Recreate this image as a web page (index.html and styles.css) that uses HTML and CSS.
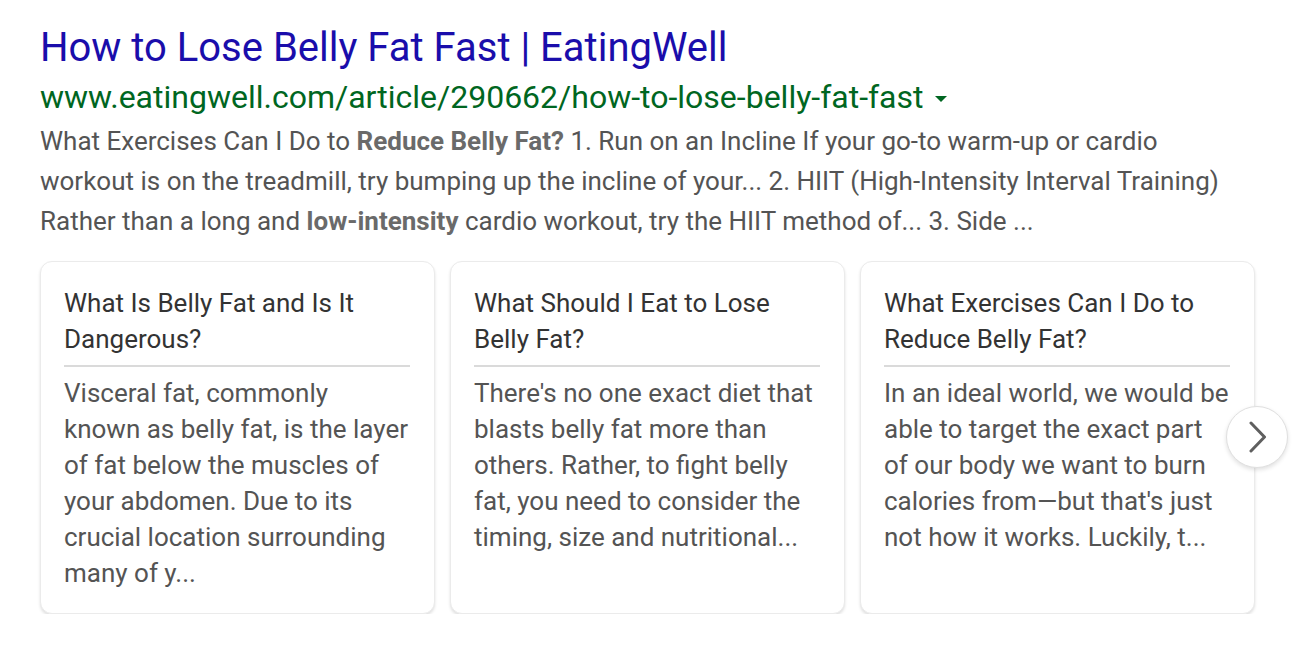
FILE: index.html
```html
<!DOCTYPE html>
<html>
<head>
<meta charset="utf-8">
<link rel="stylesheet" href="styles.css">
</head>
<body>
<div class="result">
  <h3 class="title">How to Lose Belly Fat Fast | EatingWell</h3>
  <div class="url">www.eatingwell.com/article/290662/how-to-lose-belly-fat-fast<span class="caret"></span></div>
  <div class="snippet">What Exercises Can I Do to <b>Reduce Belly Fat?</b> 1. Run on an Incline If your go-to warm-up or cardio workout is on the treadmill, try bumping up the incline of your... 2. HIIT (High-Intensity Interval Training) Rather than a long and <b>low-intensity</b> cardio workout, try the HIIT method of... 3. Side ...</div>
  <div class="carousel">
    <div class="card">
      <div class="card-title">What Is Belly Fat and Is It Dangerous?</div>
      <div class="card-body">Visceral fat, commonly known as belly fat, is the layer of fat below the muscles of your abdomen. Due to its crucial location surrounding many of y...</div>
    </div>
    <div class="card">
      <div class="card-title">What Should I Eat to Lose Belly Fat?</div>
      <div class="card-body">There's no one exact diet that blasts belly fat more than others. Rather, to fight belly fat, you need to consider the timing, size and nutritional...</div>
    </div>
    <div class="card">
      <div class="card-title">What Exercises Can I Do to Reduce Belly Fat?</div>
      <div class="card-body">In an ideal world, we would be able to target the exact part of our body we want to burn calories from—but that's just not how it works. Luckily, t...</div>
    </div>
    <button class="next" aria-label="Next">
      <svg width="32" height="32" viewBox="0 0 32 32"><path d="M10 2 L23.5 16 L10 30" fill="none" stroke="#5f5f5f" stroke-width="3" stroke-linecap="round" stroke-linejoin="round"/></svg>
    </button>
  </div>
</div>
</body>
</html>
```

FILE: styles.css
```css
html, body {
  margin: 0;
  padding: 0;
  background: #fff;
}
body {
  font-family: Roboto, "Liberation Sans", Arial, sans-serif;
}
.result {
  padding: 23px 0 0 40px;
  width: 1216px;
}
.title {
  margin: 0;
  font-size: 40px;
  line-height: 50px;
  font-weight: 400;
  color: #1a0dab;
  white-space: nowrap;
}
.url {
  font-size: 32px;
  line-height: 48px;
  color: #006621;
  white-space: nowrap;
  display: flex;
  align-items: center;
}
.caret {
  display: inline-block;
  margin-left: 11px;
  margin-top: 4px;
  width: 0;
  height: 0;
  border-left: 6px solid transparent;
  border-right: 6px solid transparent;
  border-top: 6px solid #006621;
}
.snippet {
  font-size: 26px;
  line-height: 40px;
  color: #545454;
  width: 1200px;
}
.snippet b {
  color: #6a6a6a;
  font-weight: 700;
}
.carousel {
  position: relative;
  display: flex;
  gap: 15px;
  margin-top: 20px;
  width: 1216px;
}
.card {
  box-sizing: border-box;
  width: 395px;
  flex: none;
  border: 1px solid #ebebeb;
  border-radius: 12px;
  box-shadow: 0 2px 3px rgba(0,0,0,0.12);
  padding: 23px 24px 22px 23px;
  background: #fff;
}
.card-title {
  font-size: 26px;
  line-height: 36px;
  color: #333;
  padding-bottom: 8px;
  border-bottom: 2px solid #dadada;
  margin-bottom: 8px;
}
.card-body {
  font-size: 26px;
  line-height: 36px;
  color: #545454;
}
.next {
  position: absolute;
  left: 1186px;
  top: 145px;
  width: 62px;
  height: 62px;
  border-radius: 50%;
  border: 1px solid #e0e0e0;
  background: #fff;
  box-shadow: 0 2px 4px rgba(0,0,0,0.12);
  display: flex;
  align-items: center;
  justify-content: center;
  padding: 0;
}
```
